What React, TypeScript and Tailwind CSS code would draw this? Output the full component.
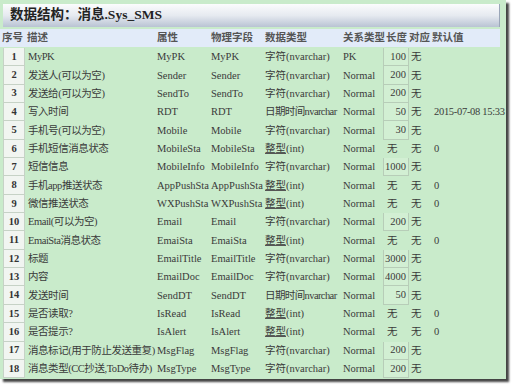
type Row = [string, string, string, string, string, string, string, string];

const rows: Row[] = [
  ["MyPK", "MyPK", "MyPK", "字符(nvarchar)", "PK", "100", "无", ""],
  ["发送人(可以为空)", "Sender", "Sender", "字符(nvarchar)", "Normal", "200", "无", ""],
  ["发送给(可以为空)", "SendTo", "SendTo", "字符(nvarchar)", "Normal", "200", "无", ""],
  ["写入时间", "RDT", "RDT", "日期时间nvarchar", "Normal", "50", "无", "2015-07-08 15:33"],
  ["手机号(可以为空)", "Mobile", "Mobile", "字符(nvarchar)", "Normal", "30", "无", ""],
  ["手机短信消息状态", "MobileSta", "MobileSta", "整型(int)", "Normal", "无", "无", "0"],
  ["短信信息", "MobileInfo", "MobileInfo", "字符(nvarchar)", "Normal", "1000", "无", ""],
  ["手机app推送状态", "AppPushSta", "AppPushSta", "整型(int)", "Normal", "无", "无", "0"],
  ["微信推送状态", "WXPushSta", "WXPushSta", "整型(int)", "Normal", "无", "无", "0"],
  ["Email(可以为空)", "Email", "Email", "字符(nvarchar)", "Normal", "200", "无", ""],
  ["EmaiSta消息状态", "EmaiSta", "EmaiSta", "整型(int)", "Normal", "无", "无", "0"],
  ["标题", "EmailTitle", "EmailTitle", "字符(nvarchar)", "Normal", "3000", "无", ""],
  ["内容", "EmailDoc", "EmailDoc", "字符(nvarchar)", "Normal", "4000", "无", ""],
  ["发送时间", "SendDT", "SendDT", "日期时间nvarchar", "Normal", "50", "无", ""],
  ["是否读取?", "IsRead", "IsRead", "整型(int)", "Normal", "无", "无", "0"],
  ["是否提示?", "IsAlert", "IsAlert", "整型(int)", "Normal", "无", "无", "0"],
  ["消息标记(用于防止发送重复)", "MsgFlag", "MsgFlag", "字符(nvarchar)", "Normal", "200", "无", ""],
  ["消息类型(CC抄送,ToDo待办)", "MsgType", "MsgType", "字符(nvarchar)", "Normal", "200", "无", ""],
];

const font = "font-['Liberation_Serif','Noto_Sans_CJK_SC',serif]";

function TypeCell({ value }: { value: string }) {
  if (value.startsWith("整型")) {
    return (
      <span>
        <span className="underline decoration-[#555]">整型</span>
        {value.slice(2)}
      </span>
    );
  }
  return <span className={value.startsWith("日期") ? "tracking-[-0.6px]" : ""}>{value}</span>;
}

export default function App() {
  return (
    <div className={`w-[512px] h-[385px] bg-white ${font} text-[10.5px] text-[#3a3a3a]`}>
      <div className="w-[506px] h-[379px] bg-[#c9ebcb] shadow-[3px_3px_2px_#444] pt-[4px]">
        {/* title bar */}
        <div className="mx-[3px] w-[497px] h-[23px] bg-gradient-to-b from-[#fbfcfd] via-[#e6eaf0] to-[#b9c3d3] border-r border-[#9aa6b8] flex items-center pl-[7px]">
          <span className="text-[13.5px] font-bold text-[#222]">数据结构：消息.Sys_SMS</span>
        </div>

        {/* header */}
        <div className="mt-[2px] w-[500px] h-[18px] bg-[#e2ebf9] flex items-center font-bold text-[#555] whitespace-nowrap">
          <div className="w-[25px] pl-[2px]">序号</div>
          <div className="w-[132px] pl-[2px]">描述</div>
          <div className="w-[54px]">属性</div>
          <div className="w-[54px]">物理字段</div>
          <div className="w-[78px]">数据类型</div>
          <div className="w-[43px]">关系类型</div>
          <div className="w-[23px]">长度</div>
          <div className="w-[23px]">对应</div>
          <div>默认值</div>
        </div>

        {/* rows */}
        <div className="mt-[1px]">
          {rows.map((r, i) => {
            const boxed = r[5] !== "无";
            return (
              <div key={i} className="h-[18.35px] flex items-stretch whitespace-nowrap">
                <div className="ml-[3px] w-[22px] bg-[#f1f5f1] border-b border-r border-l border-[#c6d2c6] flex items-center justify-center font-bold text-[#333]">
                  {i + 1}
                </div>
                <div className="w-[132px] pl-[3px] flex items-center tracking-[-0.45px]">{r[0]}</div>
                <div className="w-[54px] flex items-center">{r[1]}</div>
                <div className="w-[54px] flex items-center">{r[2]}</div>
                <div className="w-[78px] flex items-center">
                  <TypeCell value={r[3]} />
                </div>
                <div className="w-[40px] flex items-center">{r[4]}</div>
                {boxed ? (
                  <div className="w-[26px] bg-[#d2efd3] border-l border-b border-r border-[#b7cdb8] flex items-center justify-end pr-[2px]">
                    {r[5]}
                  </div>
                ) : (
                  <div className="w-[26px] flex items-center pl-[4px]">{r[5]}</div>
                )}
                <div className="w-[23px] flex items-center pl-[2px]">{r[6]}</div>
                <div className="flex items-center pl-[2px] tracking-[-0.3px]">{r[7]}</div>
              </div>
            );
          })}
        </div>
      </div>
    </div>
  );
}
